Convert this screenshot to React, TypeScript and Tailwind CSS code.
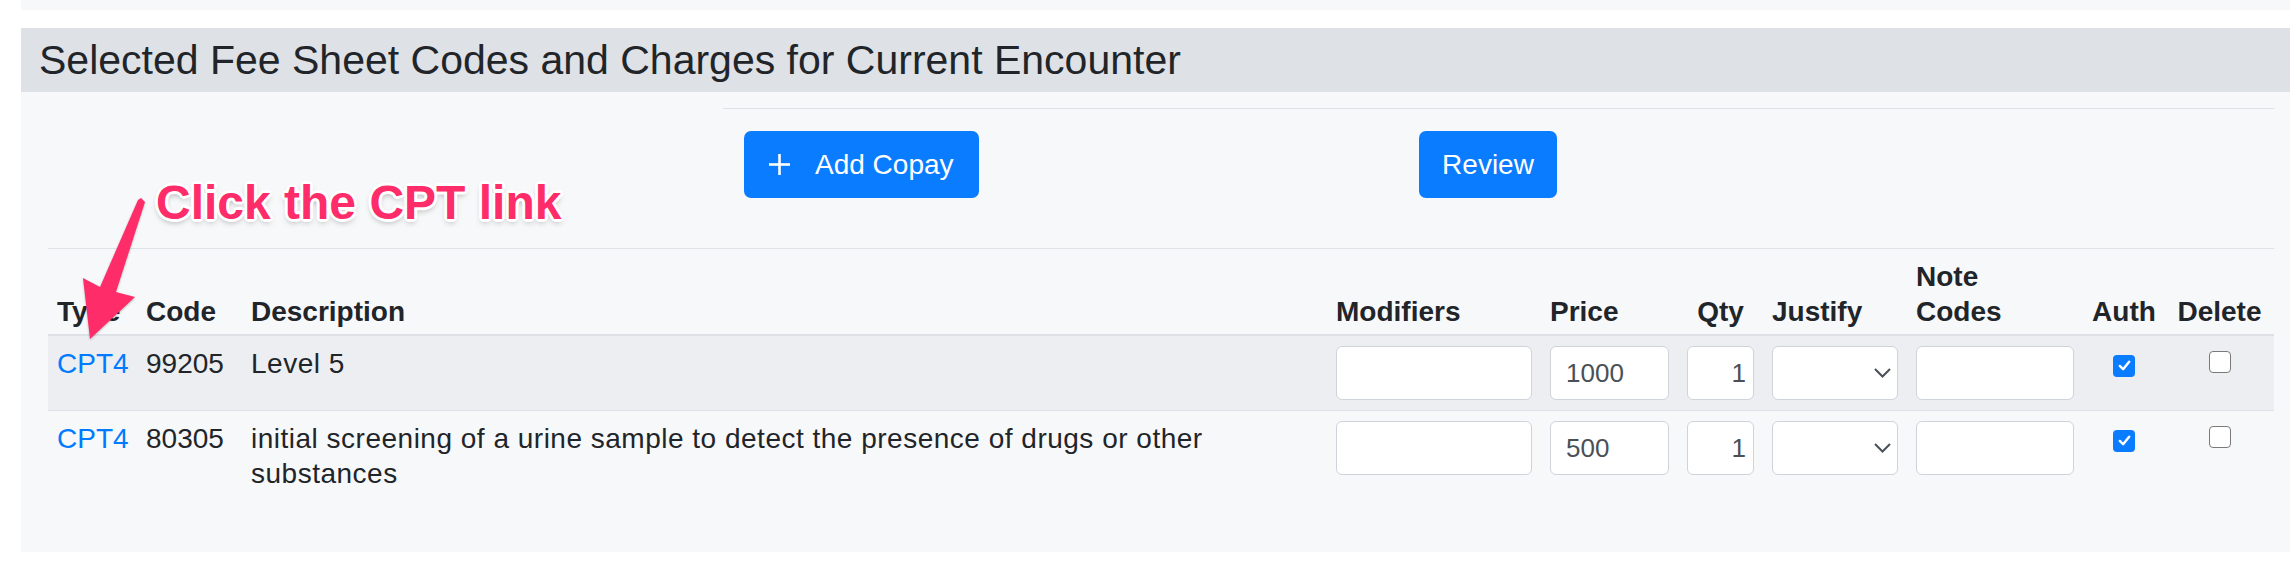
import React from 'react'

const COLS = [
  { key: 'type', label: 'Type', w: 'w-[89px]', align: 'text-left' },
  { key: 'code', label: 'Code', w: 'w-[105px]', align: 'text-left' },
  { key: 'desc', label: 'Description', w: 'w-[1085px]', align: 'text-left' },
  { key: 'mod', label: 'Modifiers', w: 'w-[214px]', align: 'text-left' },
  { key: 'price', label: 'Price', w: 'w-[137px]', align: 'text-left' },
  { key: 'qty', label: 'Qty', w: 'w-[85px]', align: 'text-center' },
  { key: 'just', label: 'Justify', w: 'w-[144px]', align: 'text-left' },
  { key: 'note', label: 'Note Codes', w: 'w-[176px]', align: 'text-left' },
  { key: 'auth', label: 'Auth', w: 'w-[82px]', align: 'text-center' },
  { key: 'del', label: 'Delete', w: 'w-[109px]', align: 'text-center' },
]

const ROWS = [
  { code: '99205', desc: 'Level 5', price: '1000', shaded: true },
  {
    code: '80305',
    desc: 'initial screening of a urine sample to detect the presence of drugs or other substances',
    price: '500',
    shaded: false,
  },
]

function Box({ checked }: { checked: boolean }) {
  if (checked) {
    return (
      <span className="inline-flex h-[22px] w-[22px] items-center justify-center rounded-[4px] bg-[#0a7cff]">
        <svg width="15" height="15" viewBox="0 0 16 16" fill="none" stroke="#fff" strokeWidth="2.6" strokeLinecap="round" strokeLinejoin="round" aria-hidden="true">
          <polyline points="3 8.5 6.5 12 13 4" />
        </svg>
      </span>
    )
  }
  return <span className="inline-block h-[22px] w-[22px] rounded-[4px] border-[1.5px] border-[#7a7a7a] bg-white" />
}

const inputCls =
  'block h-[54px] w-full rounded-[6px] border border-[#ced4da] bg-white px-[15px] text-[26px] text-[#495057] outline-none'

export default function App() {
  return (
    <div className="relative min-h-[564px] bg-white font-['Liberation_Sans',Arial,sans-serif] text-[#212529]">
      {/* strip from the panel above */}
      <div className="ml-[21px] h-[10px] bg-[#f7f8fa]" />

      {/* Title bar */}
      <div className="ml-[21px] mt-[18px] flex h-[64px] items-center bg-[#dee1e6] pl-[18px]">
        <h2 className="text-[41px] leading-none font-normal text-[#212529]">
          Selected Fee Sheet Codes and Charges for Current Encounter
        </h2>
      </div>

      {/* Panel */}
      <div className="ml-[21px] h-[460px] bg-[#f7f8fa] pl-[27px] pr-[16px] pt-[16px]">
        <div className="ml-[675px] border-t border-[#dee2e6] pt-[22px]">
          <div className="flex items-start">
            <button
              type="button"
              className="ml-[21px] flex h-[67px] w-[235px] items-center rounded-[7px] bg-[#0a7cff] pl-[24px] text-[28px] text-white"
            >
              <svg width="23" height="23" viewBox="0 0 23 23" fill="none" stroke="currentColor" strokeWidth="2.6" aria-hidden="true">
                <line x1="11.5" y1="1" x2="11.5" y2="22" />
                <line x1="1" y1="11.5" x2="22" y2="11.5" />
              </svg>
              <span className="ml-[24px]">Add Copay</span>
            </button>
            <button
              type="button"
              className="ml-[440px] flex h-[67px] w-[138px] items-center justify-center rounded-[7px] bg-[#0a7cff] text-[28px] text-white"
            >
              Review
            </button>
          </div>
        </div>

        {/* Codes table */}
        <table className="mt-[50px] w-[2226px] table-fixed border-separate border-spacing-0 text-[28px] leading-[35px]">
          <thead>
            <tr>
              {COLS.map((c) => (
                <th
                  key={c.key}
                  className={`${c.w} ${c.align} border-t border-b-2 border-t-[#dee2e6] border-b-[#dee2e6] px-[9px] pt-[10px] pb-[5px] align-bottom font-bold`}
                >
                  {c.key === 'note' ? (
                    <>
                      Note
                      <br />
                      Codes
                    </>
                  ) : (
                    c.label
                  )}
                </th>
              ))}
            </tr>
          </thead>
          <tbody>
            {ROWS.map((r, i) => {
              const td = `${r.shaded ? 'bg-[#eceef1]' : ''} ${i > 0 ? 'border-t border-[#dee2e6]' : ''} px-[9px] pt-[10px] pb-[10px] align-top`
              return (
                <tr key={r.code}>
                  <td className={td}>
                    <a href="#" className="text-[#007bff]">CPT4</a>
                  </td>
                  <td className={td}>{r.code}</td>
                  <td className={td}>
                    <div className="max-w-[1000px] tracking-[0.5px]">{r.desc}</div>
                  </td>
                  <td className={td}>
                    <input className={inputCls} defaultValue="" readOnly />
                  </td>
                  <td className={td}>
                    <input className={inputCls} defaultValue={r.price} readOnly />
                  </td>
                  <td className={td}>
                    <input className={`${inputCls} text-right !px-[7px]`} defaultValue="1" readOnly />
                  </td>
                  <td className={td}>
                    <div className="flex h-[54px] w-full items-center justify-end rounded-[6px] border border-[#ced4da] bg-white pr-[6px]">
                      <svg width="17" height="10" viewBox="0 0 17 10" fill="none" stroke="#495057" strokeWidth="2" aria-hidden="true">
                        <polyline points="1 1 8.5 8.5 16 1" />
                      </svg>
                    </div>
                  </td>
                  <td className={td}>
                    <input className={inputCls} defaultValue="" readOnly />
                  </td>
                  <td className={`${td} text-center`}>
                    <Box checked />
                  </td>
                  <td className={`${td} text-center`}>
                    <Box checked={false} />
                  </td>
                </tr>
              )
            })}
          </tbody>
        </table>
      </div>

      {/* Annotation overlay */}
      <div className="pointer-events-none absolute left-[156px] top-[179px] z-20 text-[48px] leading-none font-bold text-[#ff2c6a] [text-shadow:2px_2px_0_#fff,-2px_-2px_0_#fff,2px_-2px_0_#fff,-2px_2px_0_#fff,0_3px_0_#fff,0_-3px_0_#fff,3px_0_0_#fff,-3px_0_0_#fff,0_3px_6px_rgba(0,0,0,0.35)]">
        Click the CPT link
      </div>
      <svg
        className="pointer-events-none absolute left-0 top-0 z-20 drop-shadow-[0_1px_1px_rgba(0,0,0,0.25)]"
        width="200"
        height="360"
        viewBox="0 0 200 360"
        aria-hidden="true"
      >
        <polygon
          points="141,198 145,202 116,292 135,297 90,339 83,278 100,287 138,200"
          fill="#ff2c6a"
        />
      </svg>
    </div>
  )
}
